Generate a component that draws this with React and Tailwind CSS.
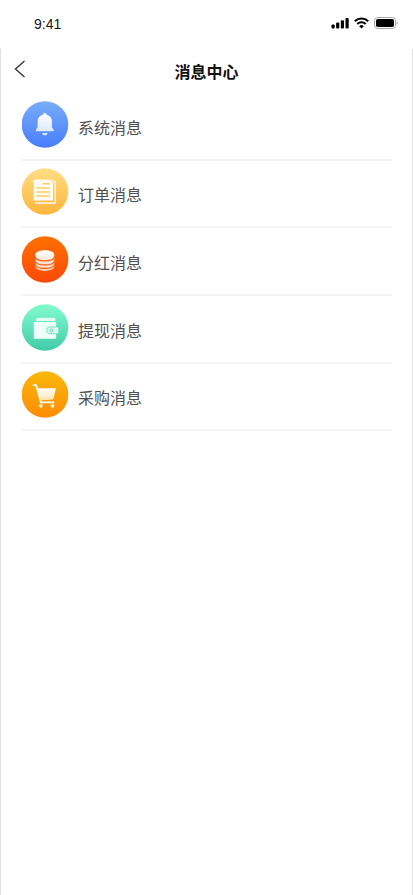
import React from "react";

const BellIcon = () => (
  <g fill="url(#glyph-bell)">
    <path d="M20.900 13.800a1.900 1.900 0 0 1 3.800 0C28.300 14.600 30 17.400 30 20.800V26.200L31.700 28.800Q32 30.300 30.800 30.300H14.800Q13.600 30.300 13.900 28.800L15.600 26.200V20.800C15.600 17.400 17.300 14.600 20.900 13.800Z" />
    <path d="M20.100 32h5.400a2.700 2.300 0 0 1-5.400 0Z" />
  </g>
);

const OrderIcon = () => (
  <g>
    <path d="M14.300 33.900V35.200H33.300V14.200L30.800 11.700" fill="none" stroke="#fff" strokeWidth="1.300" />
    <path d="M12.300 11.400H28.300L31 14.300V32.600H12.300a.8.800 0 0 1-.8-.8V12.200a.8.800 0 0 1 .8-.8Z" fill="#fffaf0" />
    <path d="M21 15.700h7M14.500 20h13.500M14.500 24h13.500M14.500 28h13.500" stroke="#ffd067" strokeWidth="1.500" />
  </g>
);

const CoinsIcon = () => (
  <g>
    <path
      d="M13.300 18.800C13.300 12.600 32.300 12.600 32.300 18.800V30.300C32.300 36.400 13.300 36.400 13.300 30.300Z"
      fill="url(#glyph-coins)"
    />
    <path
      d="M13 20.300C13.800 26.300 31.800 26.300 32.600 20.300M13 24.500C13.800 30.400 31.800 30.400 32.600 24.500M13 28C13.800 33.900 31.800 33.900 32.600 28"
      fill="none"
      stroke="#fb5a08"
      strokeWidth="1.200"
    />
  </g>
);

const WalletIcon = () => (
  <g>
    <path d="M15.500 13.700h16.500a1.500 1.500 0 0 1 1.500 1.500V17H14v-1.800a1.500 1.500 0 0 1 1.500-1.500Z" fill="#dffcf1" />
    <rect x="11.800" y="18" width="22.400" height="16.800" rx="1.300" fill="#effff9" />
    <path
      d="M28 22.900h7.500a1.300 1.300 0 0 1 1.300 1.300v4.200a1.300 1.300 0 0 1-1.300 1.300H28a3.400 3.400 0 0 1 0-6.800Z"
      fill="#e2fcf3"
      stroke="#67dcb9"
      strokeWidth=".9"
    />
    <circle cx="29.500" cy="26.300" r="1.500" fill="none" stroke="#5ed6b4" strokeWidth="1" />
  </g>
);

const CartIcon = () => (
  <g>
    <path d="M10.800 14.200h3.400l4.600 17.100h13.500" fill="none" stroke="#fff" strokeWidth="1.700" strokeLinejoin="round" />
    <path d="M15.300 17.300H34L31.600 27.300Q31.400 28.200 30.400 28.400L18.500 29.300Z" fill="url(#glyph-cart)" />
    <circle cx="18.800" cy="34.800" r="1.900" fill="#fff3d6" />
    <circle cx="30.500" cy="34.800" r="1.900" fill="#fff3d6" />
  </g>
);

const messages = [
  { id: "system", title: "系统消息", from: "#79adfb", to: "#477dfb", Icon: BellIcon },
  { id: "order", title: "订单消息", from: "#ffdf84", to: "#ffb63c", Icon: OrderIcon },
  { id: "bonus", title: "分红消息", from: "#ff7000", to: "#fb4a08", Icon: CoinsIcon },
  { id: "withdraw", title: "提现消息", from: "#83fbcf", to: "#42cba8", Icon: WalletIcon },
  { id: "purchase", title: "采购消息", from: "#fab80a", to: "#ff8c03", Icon: CartIcon },
];

// Shared fades for the white glyphs
const GlyphGradients = () => (
  <svg className="absolute h-0 w-0" aria-hidden="true">
    <defs>
      <linearGradient id="glyph-bell" x1="0" y1="12" x2="0" y2="35" gradientUnits="userSpaceOnUse">
        <stop stopColor="#fff" />
        <stop offset="1" stopColor="#d3e3ff" />
      </linearGradient>
      <linearGradient id="glyph-coins" x1="0" y1="14" x2="0" y2="35" gradientUnits="userSpaceOnUse">
        <stop stopColor="#fff" />
        <stop offset="1" stopColor="#ffd0b8" />
      </linearGradient>
      <linearGradient id="glyph-cart" x1="0" y1="17" x2="0" y2="30" gradientUnits="userSpaceOnUse">
        <stop stopColor="#fff" />
        <stop offset="1" stopColor="#ffe3a8" />
      </linearGradient>
    </defs>
  </svg>
);

const StatusBar = () => (
  <div className="flex h-[49px] items-start justify-between pr-[15px] pl-[34px]">
    <span className="mt-[14px] font-['Liberation_Sans',sans-serif] text-[14px] leading-5 text-[#151515]">
      9:41
    </span>
    <div className="mt-[17px] flex gap-[5px]">
      <svg width="18" height="12" viewBox="0 0 18 12">
        <rect x=".5" y="7.500" width="3.200" height="4" rx="1" />
        <rect x="5.100" y="5.500" width="3.200" height="6" rx="1" />
        <rect x="9.800" y="3.300" width="3.200" height="8.200" rx="1" />
        <rect x="14.500" y="1" width="3.200" height="10.500" rx="1" />
      </svg>
      <svg width="15" height="12" viewBox="0 0 15 12" fill="none" stroke="#000" strokeWidth="2">
        <path d="M.8 4.300a9.600 9.600 0 0 1 13.400 0" />
        <path d="M3.300 7a6 6 0 0 1 8.400 0" />
        <path d="M5.200 9.200a3.300 3.300 0 0 1 4.600 0L7.500 11.500Z" fill="#000" stroke="none" />
      </svg>
      <svg width="24" height="12" viewBox="0 0 24 12">
        <rect x=".5" y=".5" width="21" height="11" rx="3.200" fill="none" stroke="#a6a6a6" />
        <rect x="2" y="2" width="18" height="8" rx="1.800" />
        <path d="M22.700 4.200v3.600q1.100-.5 1.100-1.800t-1.100-1.800Z" fill="#a0a0a0" />
      </svg>
    </div>
  </div>
);

const MessageItem = ({ id, title, from, to, Icon }) => (
  <li className="flex h-[67.700px] items-start border-b-2 border-[#f4f4f4] pt-[7.500px]">
    <svg className="ml-px shrink-0" width="47" height="47" viewBox="0 0 47 47">
      <defs>
        <linearGradient id={`bg-${id}`} x1="0" y1="0" x2="0" y2="1">
          <stop stopColor={from} />
          <stop offset="1" stopColor={to} />
        </linearGradient>
      </defs>
      <circle cx="23" cy="23.500" r="23.300" fill={`url(#bg-${id})`} />
      <Icon />
    </svg>
    <span className="mt-[14px] ml-[9px] text-[16px] leading-6 text-[#505050]">
      {title}
    </span>
  </li>
);

const App = () => {
  return (
    <div className="flex h-[895px] w-full flex-col overflow-hidden bg-white font-['Noto_Sans_CJK_SC',sans-serif]">
      <GlyphGradients />
      <StatusBar />
      <main className="flex-1 border-x border-[#e0e0e0]">
        <header className="grid h-11 grid-cols-[1fr_auto_1fr] items-center">
          <button type="button" aria-label="返回" className="mb-1 ml-[13px] w-3">
            <svg width="12" height="18" viewBox="0 0 12 18" fill="none" stroke="#333" strokeWidth="1.400">
              <path d="M10.500 1 1.500 9l9 8" />
            </svg>
          </button>
          <h1 className="text-[16px] leading-6 font-bold text-[#111]">消息中心</h1>
        </header>
        <ul className="mr-5 ml-5">
          {messages.map((item) => (
            <MessageItem key={item.id} {...item} />
          ))}
        </ul>
      </main>
    </div>
  );
};

export default App;
